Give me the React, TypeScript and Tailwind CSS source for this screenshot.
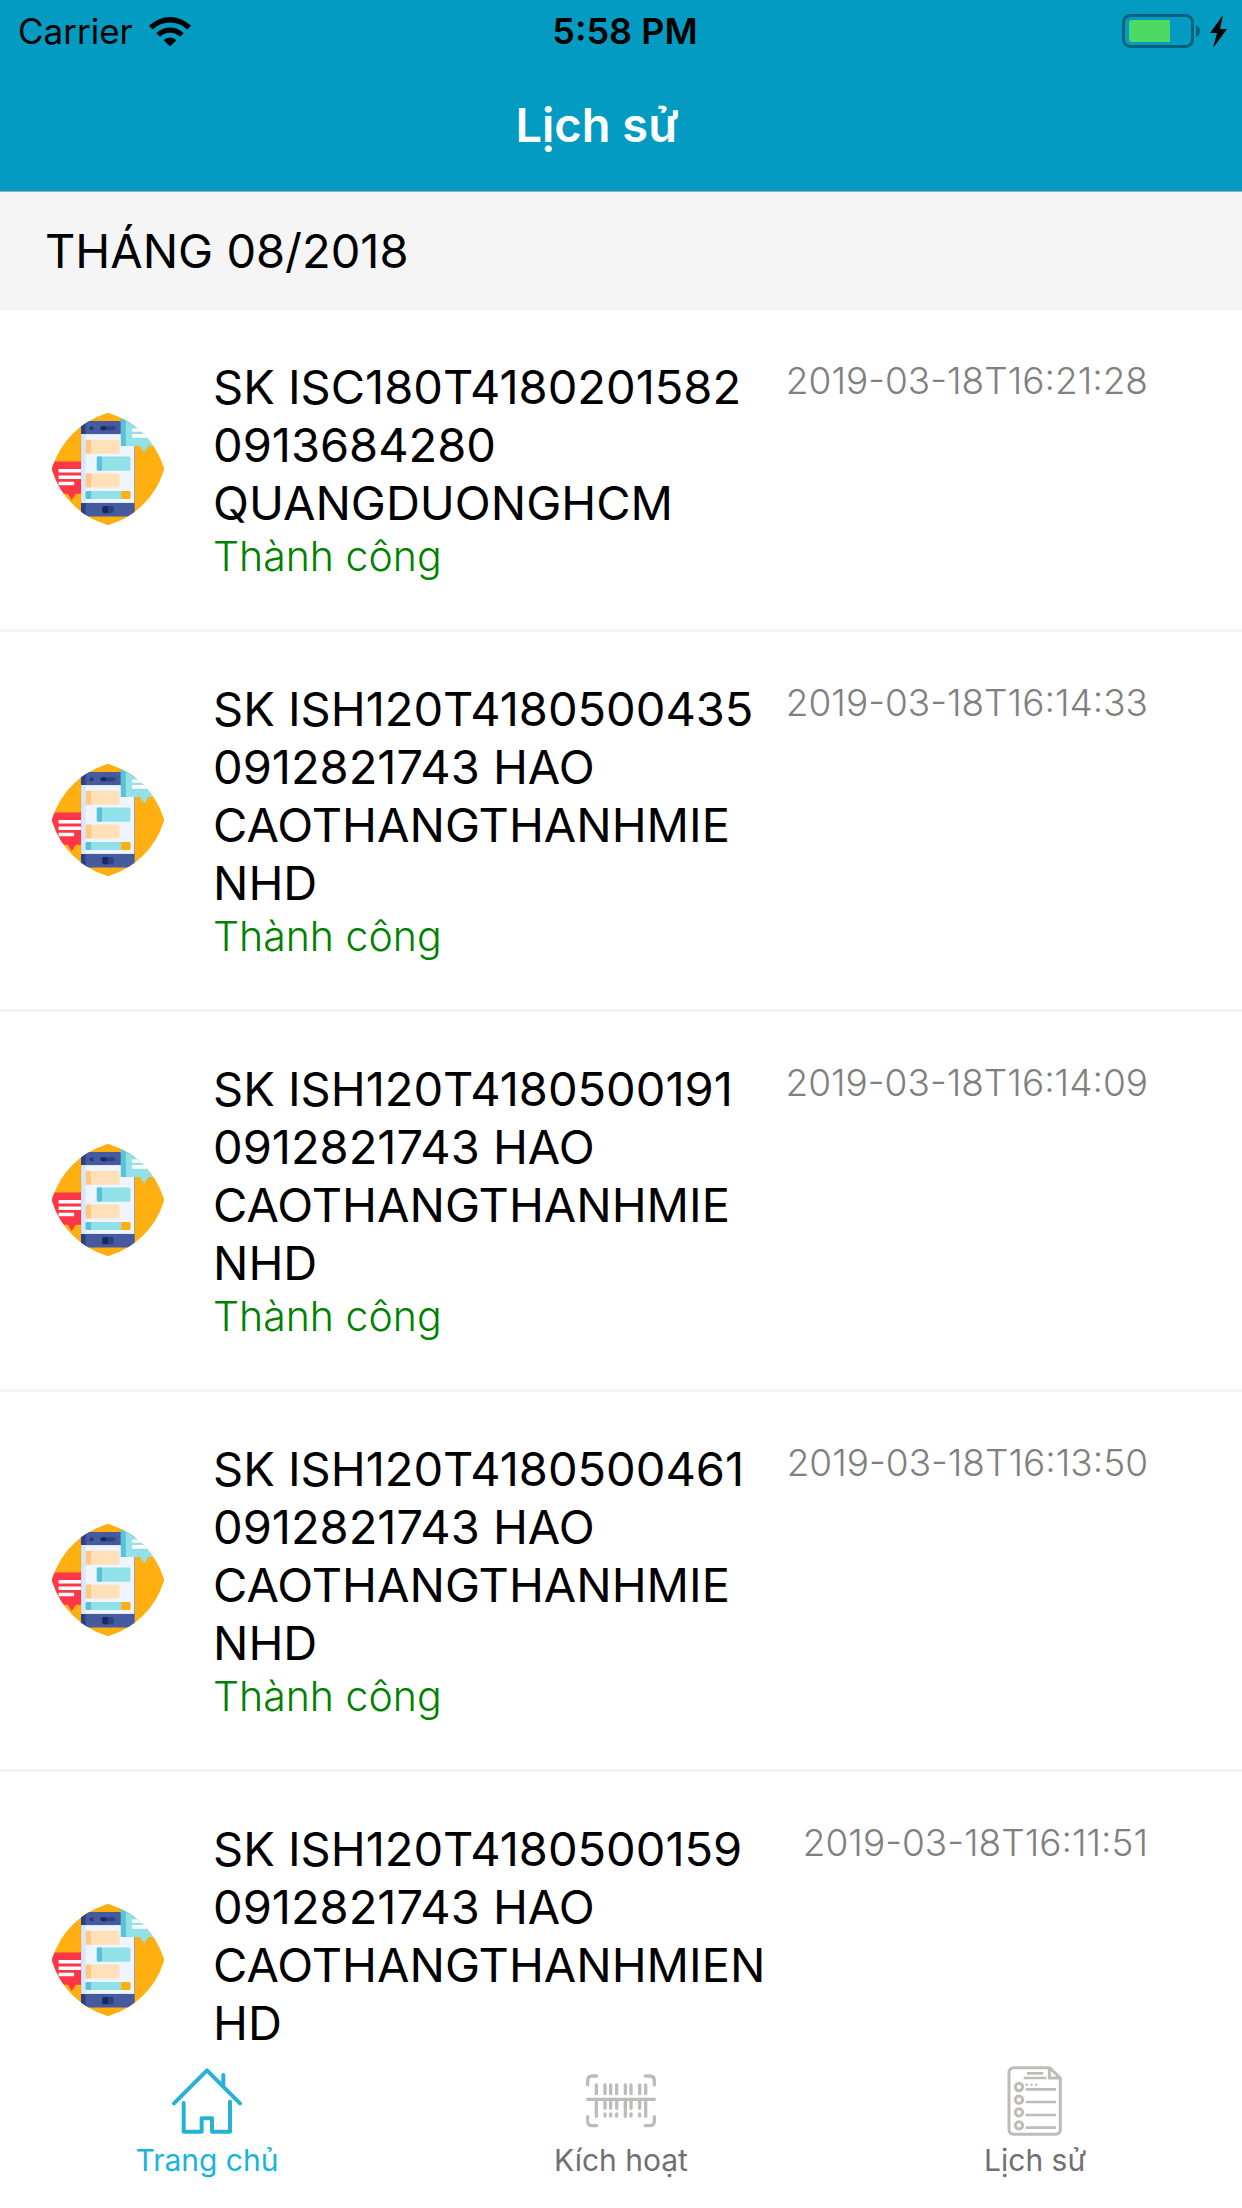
type Entry = { lines: string[]; time: string };

const entries: Entry[] = [
  { lines: ["SK ISC180T4180201582", "0913684280", "QUANGDUONGHCM"], time: "2019-03-18T16:21:28" },
  { lines: ["SK ISH120T4180500435", "0912821743 HAO", "CAOTHANGTHANHMIE", "NHD"], time: "2019-03-18T16:14:33" },
  { lines: ["SK ISH120T4180500191", "0912821743 HAO", "CAOTHANGTHANHMIE", "NHD"], time: "2019-03-18T16:14:09" },
  { lines: ["SK ISH120T4180500461", "0912821743 HAO", "CAOTHANGTHANHMIE", "NHD"], time: "2019-03-18T16:13:50" },
  { lines: ["SK ISH120T4180500159", "0912821743 HAO", "CAOTHANGTHANHMIEN", "HD"], time: "2019-03-18T16:11:51" },
];

function WifiIcon() {
  return (
    <svg viewBox="450 44 126 92" className="w-[42px] h-[31px]" aria-hidden="true">
      <path d="M450 73A89 89 0 0 1 576 73L565 84A74 74 0 0 0 461 84Z" />
      <path d="M472 95A58 58 0 0 1 554 95L543 106A42 42 0 0 0 483 106Z" />
      <path d="M494 116A27 27 0 0 1 532 116L513 135Z" />
    </svg>
  );
}

function BatteryIcon() {
  return (
    <svg viewBox="0 0 106 36" className="w-[106px] h-[36px]" aria-hidden="true">
      <rect x="1.5" y="2.5" width="69" height="31" rx="7" fill="none" stroke="#02617b" strokeWidth="3" />
      <path d="M10 7H48V29H10Q7 29 7 26V10Q7 7 10 7Z" fill="#4cd964" />
      <path d="M74 12Q78 14 78 18T74 24Z" fill="#02617b" />
      <path d="M101 2L88 20H95L91 35L105 16H98Z" />
    </svg>
  );
}

function ChatPhoneIcon() {
  return (
    <svg viewBox="64 70 340 340" className="size-28 shrink-0" aria-hidden="true">
      <defs>
        <clipPath id="badge">
          <path d="M226 72Q234 68 242 72A248 248 0 0 1 402 232Q406 240 402 248A248 248 0 0 1 242 408Q234 412 226 408A248 248 0 0 1 66 248Q62 240 66 232A248 248 0 0 1 226 72Z" />
        </clipPath>
      </defs>
      <g clipPath="url(#badge)">
        <rect x="60" y="66" width="350" height="350" fill="#ffaf10" />
        <path d="M60 217H154V315H136L124 334L112 315H60Z" fill="#ff3548" />
        <path d="M84 240H152V251H84ZM84 260H152V270H84ZM84 279H130Q134 284 130 289H84Z" fill="#fff" />
        <rect x="152" y="94" width="163" height="290" rx="4" fill="#465b9f" />
        <path d="M152 94H166V384H152Z" fill="#2d4180" />
        <rect x="153" y="134" width="161" height="209" fill="#eef5ff" />
        <rect x="153" y="134" width="13" height="209" fill="#d8e7fb" />
        <circle cx="184" cy="116" r="6" fill="#24376f" />
        <rect x="211" y="110" width="46" height="12" rx="6" fill="#2d4180" />
        <rect x="211" y="110" width="18" height="12" rx="6" fill="#172a60" />
        <rect x="217" y="352" width="34" height="22" rx="5" fill="#2d4180" />
        <rect x="217" y="352" width="17" height="22" rx="4" fill="#172a60" />
        <rect x="166" y="151" width="103" height="43" rx="4" fill="#ffe0b8" />
        <rect x="166" y="151" width="17" height="43" rx="4" fill="#ffc888" />
        <rect x="200" y="202" width="102" height="43" rx="4" fill="#92e1e8" />
        <rect x="200" y="202" width="16" height="43" rx="4" fill="#59c1d8" />
        <rect x="166" y="254" width="103" height="42" rx="4" fill="#ffe0b8" />
        <rect x="166" y="254" width="17" height="42" rx="4" fill="#ffc888" />
        <rect x="166" y="307" width="136" height="24" rx="4" fill="#92e1e8" />
        <rect x="166" y="307" width="17" height="24" rx="4" fill="#59c1d8" />
        <path d="M274 307H298Q302 307 302 311V327Q302 331 298 331H274Z" fill="#ffaf10" />
        <path d="M273 66H404V170H356L344 191L331 170H273Z" fill="#92e1e8" />
        <path d="M273 66H288V170H273Z" fill="#59c1d8" />
        <path d="M308 117H400V127H308Q303 122 308 117ZM308 134H400V145H308Q303 140 308 134Z" fill="#fff" />
      </g>
    </svg>
  );
}

function HomeIcon() {
  return (
    <svg viewBox="156 48 210 210" className="size-[70px]" fill="none" stroke="#27b1d6" strokeWidth="12" strokeLinecap="round" strokeLinejoin="round" aria-hidden="true">
      <path d="M162 160L261 61L360 160M310 75V106" />
      <path d="M191 159V245H245V205H276V245H330V155" />
    </svg>
  );
}

function BarcodeIcon() {
  return (
    <svg viewBox="168 48 210 210" className="size-[70px]" fill="none" stroke="#bfbbbb" strokeWidth="10" strokeLinecap="round" aria-hidden="true">
      <path d="M173 104V92Q173 78 187 78H200M346 78H359Q373 78 373 92V104M173 200V213Q173 227 187 227H200M346 227H359Q373 227 373 213V200" />
      <path d="M173 148H373" />
      <path d="M199 105V131M225 105V131M242 105V131M260 105V131M286 105V131M303 105V131M329 105V131M347 105V131" />
      <path d="M199 150V199M225 150V175M242 150V175M260 150V175M286 150V199M303 150V175M329 150V175M347 150V199" />
      <path d="M225 192V198M242 192V198M260 192V198M303 192V198M329 192V198" />
    </svg>
  );
}

function HistoryIcon() {
  return (
    <svg viewBox="120 48 210 210" className="size-[70px]" fill="none" stroke="#bfbbbb" strokeWidth="9" aria-hidden="true">
      <path d="M268 53H162Q147 53 147 68V238Q147 253 162 253H286Q301 253 301 238V84ZM268 53V84H301" strokeLinejoin="round" />
      <path d="M201 70H250M191 84H259M197 118H288M197 156H288M197 195H288M197 233H288" strokeWidth="8" />
      <path d="M197 104H204M211 104H218M225 104H232" strokeWidth="6" />
      <circle cx="177" cy="111" r="11" />
      <circle cx="177" cy="149" r="11" />
      <circle cx="177" cy="187" r="11" />
      <circle cx="177" cy="226" r="11" />
    </svg>
  );
}

const tabs = [
  { label: "Trang chủ", icon: <HomeIcon />, active: true },
  { label: "Kích hoạt", icon: <BarcodeIcon />, active: false },
  { label: "Lịch sử", icon: <HistoryIcon />, active: false },
];

export default function App() {
  return (
    <div className="flex h-screen flex-col overflow-hidden bg-white font-['Inter',sans-serif] text-black">
      <header className="shrink-0 border-b border-[#a9a9a9] bg-[#049bc2]">
        <div className="grid h-[62px] grid-cols-3 items-center pl-[18px] pr-[14px] text-[36px]">
          <div className="flex items-center gap-4">
            <span className="text-[35px]">Carrier</span>
            <WifiIcon />
          </div>
          <time className="pl-1 text-center font-semibold">5:58 PM</time>
          <div className="flex justify-end">
            <BatteryIcon />
          </div>
        </div>
        <h1 className="pr-12 pt-[33px] pb-[36px] text-center text-[47px] leading-[60px] font-semibold text-white">Lịch sử</h1>
      </header>

      <main className="min-h-0 flex-1 overflow-hidden">
        <h2 className="bg-[#f5f5f5] px-[45px] py-[29px] text-[47px] leading-[60px]">THÁNG 08/2018</h2>
        <ul>
          {entries.map((entry) => (
            <li key={entry.time} className="flex items-center border-b-3 border-[#f5f5f5] pt-[48px] pb-[49px] pl-[52px] pr-[94px]">
              <ChatPhoneIcon />
              <div className="ml-[49px] flex flex-1 items-start justify-between">
                <div>
                  <p className="text-[47px] leading-[58px]">
                    {entry.lines.map((line) => (
                      <span key={line} className="block whitespace-nowrap">{line}</span>
                    ))}
                  </p>
                  <p className="text-[41px] leading-[48px] font-light text-[#008000]">Thành công</p>
                </div>
                <time className="text-[37px] leading-[46px] font-light whitespace-nowrap text-[#808080]">{entry.time}</time>
              </div>
            </li>
          ))}
        </ul>
      </main>

      <nav className="grid h-[152px] shrink-0 grid-cols-3 bg-white">
        {tabs.map((tab) => (
          <button
            key={tab.label}
            type="button"
            aria-current={tab.active ? "page" : undefined}
            className={`flex flex-col items-center pt-[10px] text-[30px] ${tab.active ? "text-[#18b4dc]" : "text-[#707070]"}`}
          >
            {tab.icon}
            <span className="mt-1 leading-[40px]">{tab.label}</span>
          </button>
        ))}
      </nav>
    </div>
  );
}
